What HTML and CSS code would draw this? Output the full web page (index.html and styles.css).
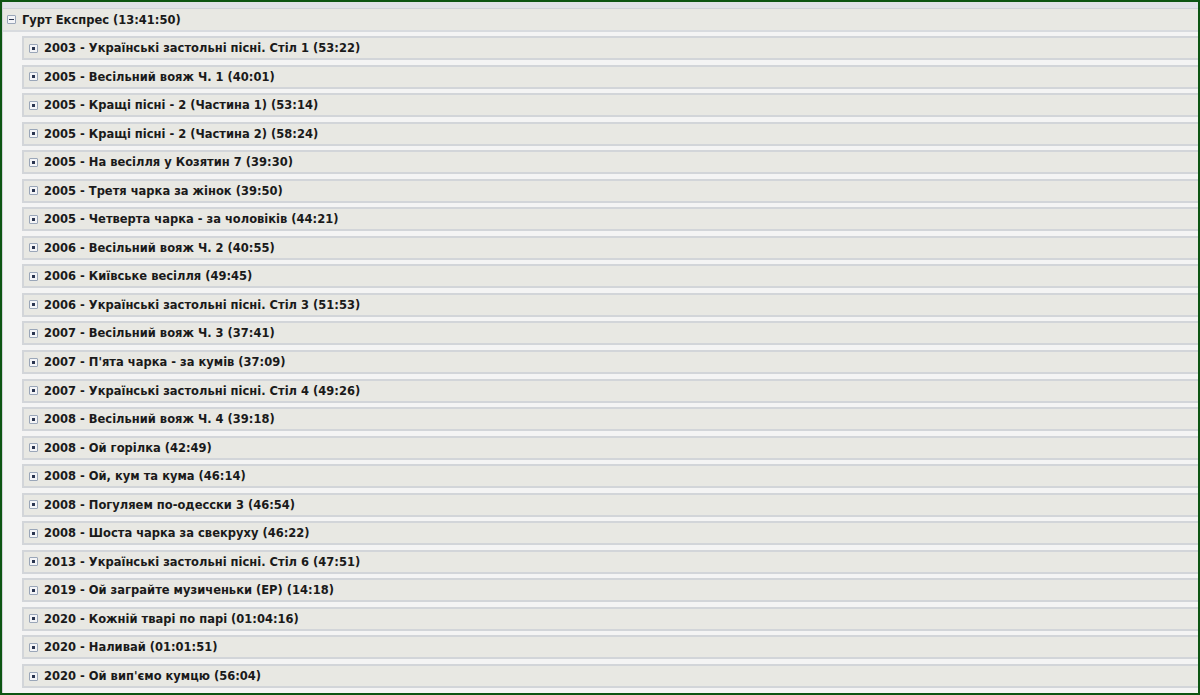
FILE: index.html
```html
<!DOCTYPE html>
<html>
<head>
<meta charset="utf-8">
<link rel="stylesheet" href="styles.css">
</head>
<body>
<div class="frame">
  <div class="root">
    <div class="strip"></div>
    <div class="row root-header"><span class="icon minus"></span><span class="label">Гурт Експрес (13:41:50)</span></div>
    <div class="children">
      <div class="row item"><span class="icon plus"></span><span class="label">2003 - Українські застольні пісні. Стіл 1 (53:22)</span></div>
      <div class="row item"><span class="icon plus"></span><span class="label">2005 - Весільний вояж Ч. 1 (40:01)</span></div>
      <div class="row item"><span class="icon plus"></span><span class="label">2005 - Кращі пісні - 2 (Частина 1) (53:14)</span></div>
      <div class="row item"><span class="icon plus"></span><span class="label">2005 - Кращі пісні - 2 (Частина 2) (58:24)</span></div>
      <div class="row item"><span class="icon plus"></span><span class="label">2005 - На весілля у Козятин 7 (39:30)</span></div>
      <div class="row item"><span class="icon plus"></span><span class="label">2005 - Третя чарка за жінок (39:50)</span></div>
      <div class="row item"><span class="icon plus"></span><span class="label">2005 - Четверта чарка - за чоловіків (44:21)</span></div>
      <div class="row item"><span class="icon plus"></span><span class="label">2006 - Весільний вояж Ч. 2 (40:55)</span></div>
      <div class="row item"><span class="icon plus"></span><span class="label">2006 - Київське весілля (49:45)</span></div>
      <div class="row item"><span class="icon plus"></span><span class="label">2006 - Українські застольні пісні. Стіл 3 (51:53)</span></div>
      <div class="row item"><span class="icon plus"></span><span class="label">2007 - Весільний вояж Ч. 3 (37:41)</span></div>
      <div class="row item"><span class="icon plus"></span><span class="label">2007 - П'ята чарка - за кумів (37:09)</span></div>
      <div class="row item"><span class="icon plus"></span><span class="label">2007 - Українські застольні пісні. Стіл 4 (49:26)</span></div>
      <div class="row item"><span class="icon plus"></span><span class="label">2008 - Весільний вояж Ч. 4 (39:18)</span></div>
      <div class="row item"><span class="icon plus"></span><span class="label">2008 - Ой горілка (42:49)</span></div>
      <div class="row item"><span class="icon plus"></span><span class="label">2008 - Ой, кум та кума (46:14)</span></div>
      <div class="row item"><span class="icon plus"></span><span class="label">2008 - Погуляем по-одесски 3 (46:54)</span></div>
      <div class="row item"><span class="icon plus"></span><span class="label">2008 - Шоста чарка за свекруху (46:22)</span></div>
      <div class="row item"><span class="icon plus"></span><span class="label">2013 - Українські застольні пісні. Стіл 6 (47:51)</span></div>
      <div class="row item"><span class="icon plus"></span><span class="label">2019 - Ой заграйте музиченьки (EP) (14:18)</span></div>
      <div class="row item"><span class="icon plus"></span><span class="label">2020 - Кожній тварі по парі (01:04:16)</span></div>
      <div class="row item"><span class="icon plus"></span><span class="label">2020 - Наливай (01:01:51)</span></div>
      <div class="row item"><span class="icon plus"></span><span class="label">2020 - Ой вип'ємо кумцю (56:04)</span></div>
    </div>
  </div>
</div>
</body>
</html>
```

FILE: styles.css
```css
html, body {
  margin: 0;
  padding: 0;
  background: #ffffff;
}
.frame {
  width: 1200px;
  height: 695px;
  box-sizing: border-box;
  border: 2px solid #0c5512;
  overflow: hidden;
  background: #f4f4f4;
}
.root {
  height: 100%;
  box-sizing: border-box;
  border-left: 1px solid #cfd2d6;
  display: flex;
  flex-direction: column;
}
.strip {
  height: 6px;
  background: #dfe2e7;
  border-bottom: 1px solid #ced2d7;
}
.row {
  display: flex;
  align-items: center;
  font-family: "DejaVu Sans", Verdana, sans-serif;
  font-weight: bold;
  font-size: 11.5px;
  color: #1a1a1a;
  background: #e8e8e3;
  box-sizing: border-box;
}
.root-header {
  height: 23px;
  padding-left: 4px;
  border-bottom: 2px solid #d8dbdf;
}
.children {
  display: flex;
  flex-direction: column;
  gap: 4.55px;
  padding: 4px 0 0 19px;
}
.item {
  height: 24px;
  padding-left: 5px;
  border: 2px solid #d2d5d9;
  border-right: none;
}
.icon {
  width: 7px;
  height: 7px;
  border: 1px solid #9aa6b8;
  background: #f3f4f7;
  border-radius: 1px;
  margin-right: 6px;
  position: relative;
  flex: none;
}
.icon.minus::after {
  content: "";
  position: absolute;
  left: 1px;
  right: 1px;
  top: 3px;
  height: 1px;
  background: #2a3550;
}
.icon.plus::after {
  content: "";
  position: absolute;
  left: 2px;
  top: 2px;
  width: 3px;
  height: 3px;
  background: #2a3550;
}
.label {
  white-space: nowrap;
}
```
